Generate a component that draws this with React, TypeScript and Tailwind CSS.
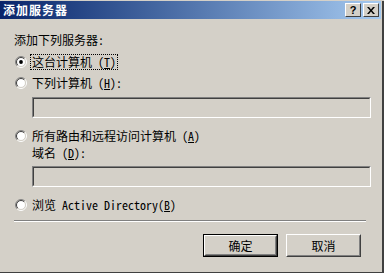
const font = { fontFamily: '"Noto Sans Mono CJK SC", "Noto Sans CJK SC", sans-serif' };
const mono = { fontFamily: '"Noto Sans Mono CJK SC", "Liberation Mono", monospace' };

function Radio({ checked }: { checked?: boolean }) {
  return (
    <svg width="12" height="12" viewBox="0 0 12 12" className="shrink-0">
      <circle cx="6" cy="6" r="4.5" fill="#ffffff" />
      <path d="M2.111 9.889 A5.5 5.5 0 0 1 9.889 2.111" fill="none" stroke="#808080" />
      <path d="M9.889 2.111 A5.5 5.5 0 0 1 2.111 9.889" fill="none" stroke="#ffffff" />
      <path d="M2.818 9.182 A4.5 4.5 0 0 1 9.182 2.818" fill="none" stroke="#404040" />
      <path d="M9.182 2.818 A4.5 4.5 0 0 1 2.818 9.182" fill="none" stroke="#d4d0c8" />
      {checked && <circle cx="6" cy="6" r="1.9" fill="#000000" />}
    </svg>
  );
}

function Key({ k }: { k: string }) {
  return (
    <span style={mono}>
      (<span className="underline underline-offset-1">{k}</span>)
    </span>
  );
}

function Field() {
  return (
    <div className="ml-[18px] w-[339px] h-[21px] border border-t-[#808080] border-l-[#808080] border-b-white border-r-white">
      <div className="h-full w-full border border-t-[#404040] border-l-[#404040] border-b-[#d4d0c8] border-r-[#d4d0c8] bg-[#d4d0c8]" />
    </div>
  );
}

function Option({ checked, focused, children, mt }: { checked?: boolean; focused?: boolean; children: React.ReactNode; mt: string }) {
  return (
    <div className={`flex items-center h-4 pl-px ${mt}`}>
      <Radio checked={checked} />
      <span className={`ml-[3px] px-px leading-[14px] border ${focused ? 'border-dotted border-black' : 'border-transparent'}`}>{children}</span>
    </div>
  );
}

function Btn({ label, def }: { label: string; def?: boolean }) {
  return (
    <div className={`w-[75px] h-[23px] ${def ? 'border border-black' : ''}`}>
      <div className="h-full w-full border border-t-white border-l-white border-b-[#404040] border-r-[#404040]">
        <div className="h-full w-full border border-t-[#d4d0c8] border-l-[#d4d0c8] border-b-[#808080] border-r-[#808080] flex items-center justify-center text-[12px] text-black">
          {label}
        </div>
      </div>
    </div>
  );
}

export default function App() {
  return (
    <div className="w-[384px] h-[273px] bg-[#d4d0c8] text-[12px] text-black overflow-hidden" style={font}>
      <div className="w-[384px] h-[273px] border-r-2 border-b-2 border-r-[#404040] border-b-[#404040]">
        <div className="h-full pr-px pb-px">
          <div className="mt-px h-[18px] flex items-center bg-linear-to-r from-[#0a246a] to-[#a6caf0] pl-[3px] pr-[2px]">
            <span className="text-white font-bold text-[12px] leading-[12px] tracking-[1px]">添加服务器</span>
            <div className="ml-auto flex gap-[2px]">
              <div className="w-4 h-[14px] bg-[#d4d0c8] border border-t-white border-l-white border-b-[#404040] border-r-[#404040] flex items-center justify-center">
                <span className="font-bold text-[11px] leading-[11px]" style={{ fontFamily: '"Liberation Sans", sans-serif' }}>?</span>
              </div>
              <div className="w-4 h-[14px] bg-[#d4d0c8] border border-t-white border-l-white border-b-[#404040] border-r-[#404040] flex items-center justify-center">
                <svg width="8" height="7" viewBox="0 0 8 7">
                  <path d="M0 0h2l2 2.5L6 0h2L5 3.5 8 7H6L4 4.5 2 7H0l3-3.5z" fill="#000" />
                </svg>
              </div>
            </div>
          </div>
          <div className="pl-[14px]">
            <div className="mt-[14px] h-[14px] leading-[14px]">添加下列服务器:</div>
            <Option mt="mt-[7px]" checked focused>这台计算机 <Key k="T" /></Option>
            <Option mt="mt-[5px]">下列计算机 <Key k="H" />:</Option>
            <div className="mt-[6px]"><Field /></div>
            <Option mt="mt-[10px]">所有路由和远程访问计算机 <Key k="A" /></Option>
            <div className="mt-[2px] ml-[18px] h-[14px] leading-[14px]">域名 <Key k="D" />:</div>
            <div className="mt-[6px]"><Field /></div>
            <Option mt="mt-[10px]">浏览 <span style={mono}>Active Directory</span><Key k="B" /></Option>
            <div className="mt-[7px] w-[352px] border-t border-b border-t-[#808080] border-b-white" />
            <div className="mt-[12px] flex gap-2 pl-[189px]">
              <Btn label="确定" def />
              <Btn label="取消" />
            </div>
          </div>
        </div>
      </div>
    </div>
  );
}
